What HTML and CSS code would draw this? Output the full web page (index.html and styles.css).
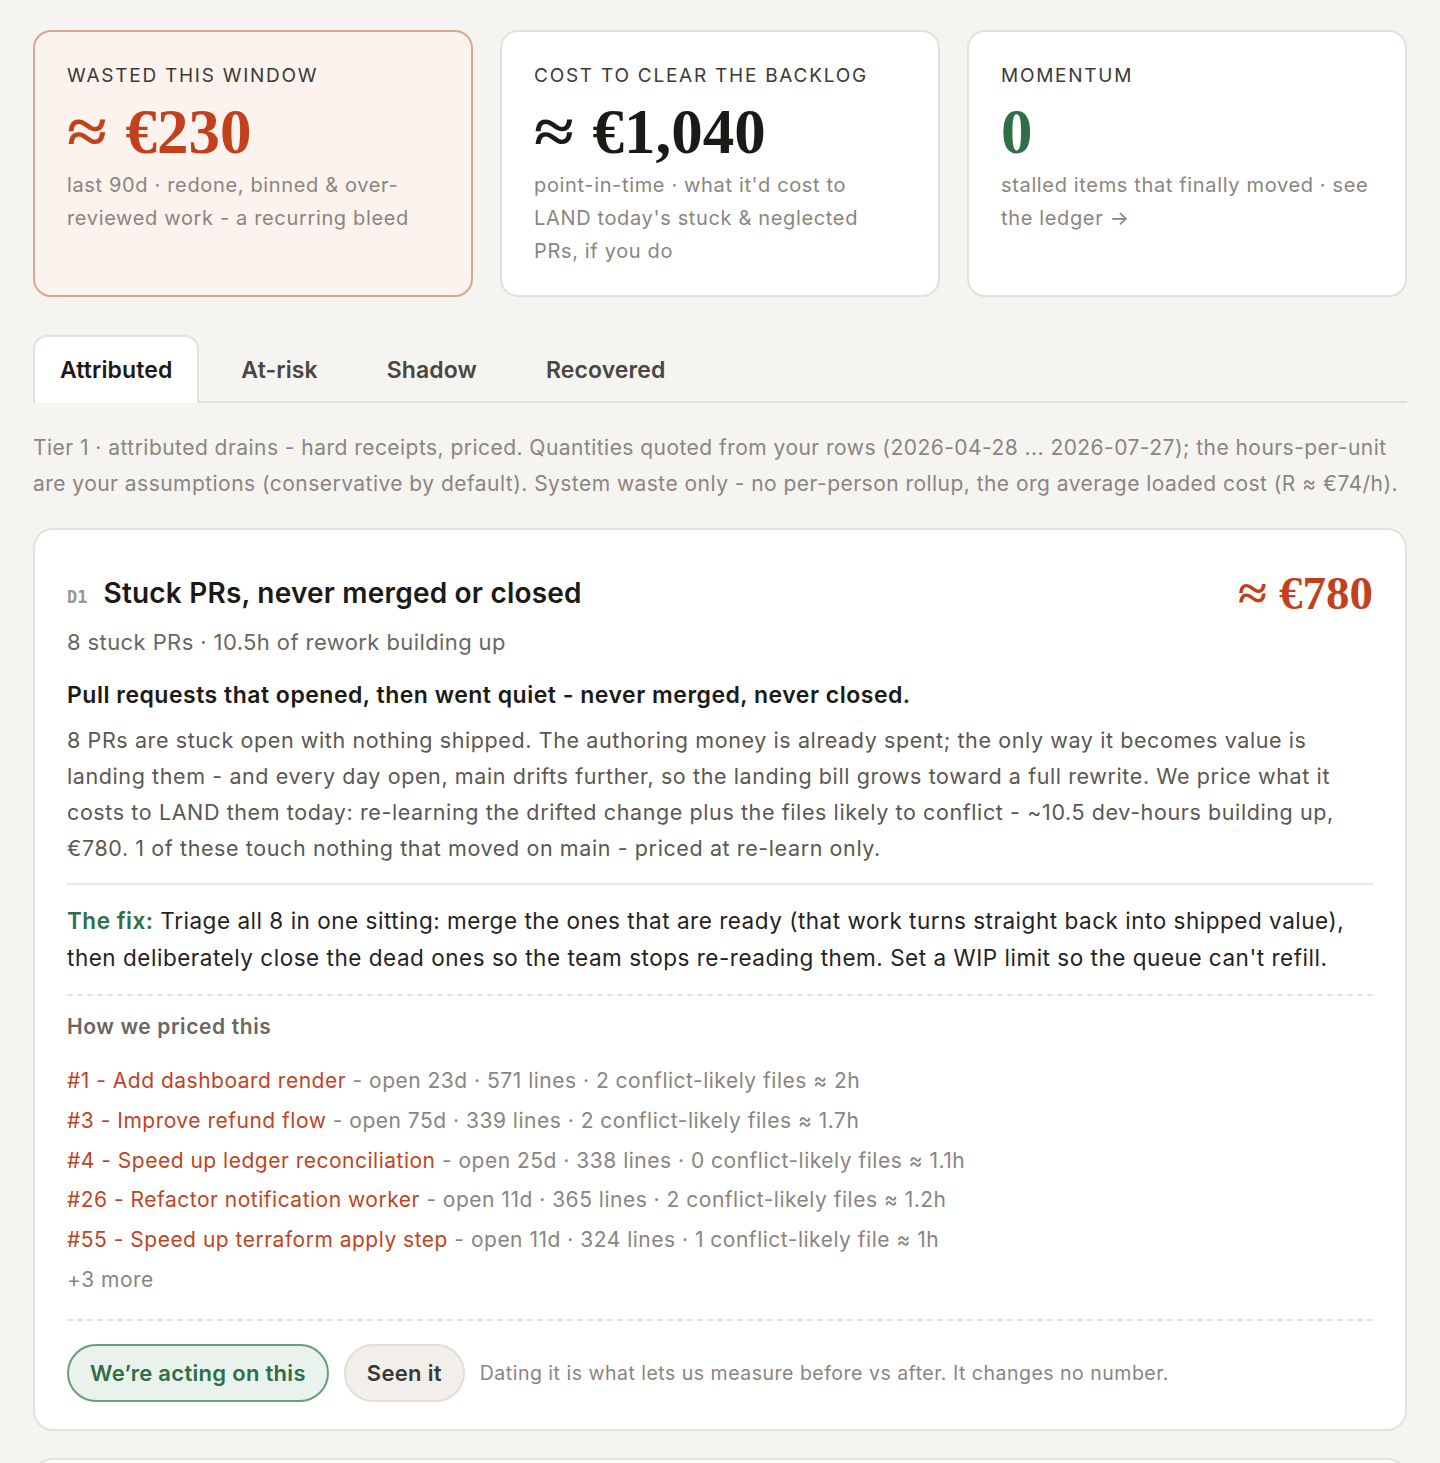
FILE: index.html
```html
<!DOCTYPE html>
<html lang="en">
<head>
<meta charset="utf-8">
<title>Drains</title>
<link rel="stylesheet" href="styles.css">
</head>
<body>
<div class="page">
  <section class="stats">
    <div class="stat stat-wasted">
      <div class="stat-label">WASTED THIS WINDOW</div>
      <div class="stat-value red"><span class="approx">≈</span>€230</div>
      <div class="stat-sub">last 90d · redone, binned &amp; over-reviewed work - a recurring bleed</div>
    </div>
    <div class="stat">
      <div class="stat-label">COST TO CLEAR THE BACKLOG</div>
      <div class="stat-value"><span class="approx">≈</span>€1,040</div>
      <div class="stat-sub">point-in-time · what it'd cost to LAND today's stuck &amp; neglected PRs, if you do</div>
    </div>
    <div class="stat">
      <div class="stat-label">MOMENTUM</div>
      <div class="stat-value green">0</div>
      <div class="stat-sub">stalled items that finally moved · see the ledger →</div>
    </div>
  </section>

  <nav class="tabs">
    <div class="tab active">Attributed</div>
    <div class="tab">At-risk</div>
    <div class="tab">Shadow</div>
    <div class="tab">Recovered</div>
  </nav>

  <p class="tier-desc">Tier 1 · attributed drains - hard receipts, priced. Quantities quoted from your rows (2026-04-28 ... 2026-07-27); the hours-per-unit are your assumptions (conservative by default). System waste only - no per-person rollup, the org average loaded cost (R ≈ €74/h).</p>

  <article class="drain">
    <header class="drain-head">
      <h2 class="drain-title"><span class="drain-code">D1</span>Stuck PRs, never merged or closed</h2>
      <div class="drain-amount"><span class="approx-sm">≈</span>€780</div>
    </header>
    <div class="drain-sub">8 stuck PRs · 10.5h of rework building up</div>
    <h3 class="drain-lead">Pull requests that opened, then went quiet - never merged, never closed.</h3>
    <p class="drain-body">8 PRs are stuck open with nothing shipped. The authoring money is already spent; the only way it becomes value is landing them - and every day open, main drifts further, so the landing bill grows toward a full rewrite. We price what it costs to LAND them today: re-learning the drifted change plus the files likely to conflict - ~10.5 dev-hours building up, €780. 1 of these touch nothing that moved on main - priced at re-learn only.</p>
    <p class="drain-fix"><strong class="fix-label">The fix:</strong> Triage all 8 in one sitting: merge the ones that are ready (that work turns straight back into shipped value), then deliberately close the dead ones so the team stops re-reading them. Set a WIP limit so the queue can't refill.</p>
    <div class="priced">
      <div class="priced-title">How we priced this</div>
      <ul class="pr-list">
        <li><span class="pr-name">#1 - Add dashboard render</span> - open 23d · 571 lines · 2 conflict-likely files ≈ 2h</li>
        <li><span class="pr-name">#3 - Improve refund flow</span> - open 75d · 339 lines · 2 conflict-likely files ≈ 1.7h</li>
        <li><span class="pr-name">#4 - Speed up ledger reconciliation</span> - open 25d · 338 lines · 0 conflict-likely files ≈ 1.1h</li>
        <li><span class="pr-name">#26 - Refactor notification worker</span> - open 11d · 365 lines · 2 conflict-likely files ≈ 1.2h</li>
        <li><span class="pr-name">#55 - Speed up terraform apply step</span> - open 11d · 324 lines · 1 conflict-likely file ≈ 1h</li>
        <li class="pr-more">+3 more</li>
      </ul>
    </div>
    <footer class="drain-actions">
      <button class="btn btn-act">We’re acting on this</button>
      <button class="btn btn-seen">Seen it</button>
      <span class="actions-note">Dating it is what lets us measure before vs after. It changes no number.</span>
    </footer>
  </article>

  <article class="drain drain-next"></article>
</div>
</body>
</html>
```
FILE: styles.css
```css
* { box-sizing: border-box; }
html, body { margin: 0; padding: 0; }
body {
  background: #f6f4f0;
  font-family: Inter, "Noto Sans", "Liberation Sans", sans-serif;
  color: #1f1d1a;
}
.page {
  padding: 30px 33px 0;
  height: 1463px;
  overflow: hidden;
}
.stats {
  display: grid;
  grid-template-columns: repeat(3, 1fr);
  gap: 27px;
}
.stat {
  background: #fff;
  border: 2px solid #e4e1db;
  border-radius: 18px;
  height: 267px;
  padding: 32px 32px 0;
}
.stat-wasted {
  background: #fcf2ee;
  border-color: #dba593;
}
.stat-label {
  font-size: 19px;
  line-height: 24px;
  letter-spacing: 1.75px;
  color: #3c3935;
}
.stat-value {
  font-family: "Liberation Serif", "DejaVu Serif", serif;
  font-weight: 700;
  font-size: 63px;
  line-height: 60px;
  margin-top: 14px;
  color: #1c1a17;
}
.approx {
  display: inline-block;
  margin-right: 24px;
  transform: scaleX(1.15);
  transform-origin: left center;
}
.stat-value.red { color: #c2411c; }
.stat-value.green { color: #2f6e47; }
.stat-sub {
  margin-top: 7px;
  font-size: 20px;
  line-height: 33px;
  color: #8a8580;
  letter-spacing: 0.65px;
}
.tabs {
  display: flex;
  gap: 15px;
  margin-top: 38px;
  border-bottom: 2px solid #e4e1db;
}
.tab {
  height: 68px;
  display: flex;
  align-items: center;
  padding: 0 25px;
  font-size: 23px;
  font-weight: 600;
  letter-spacing: 0.1px;
  color: #4a4641;
  border: 2px solid transparent;
  border-bottom: none;
  border-radius: 14px 14px 0 0;
  margin-bottom: -2px;
}
.tab.active {
  background: #fff;
  border-color: #e4e1db;
  color: #1c1a17;
}
.tier-desc {
  margin: 27px 0 0;
  font-size: 21px;
  line-height: 36px;
  color: #8a8580;
  letter-spacing: 0.46px;
}
.drain {
  margin-top: 26px;
  background: #fff;
  border: 2px solid #e4e1db;
  border-radius: 20px;
  padding: 43px 32px 27px;
}
.drain-head {
  display: flex;
  justify-content: space-between;
  align-items: center;
}
.drain-title {
  margin: 0;
  font-size: 28px;
  line-height: 40px;
  font-weight: 600;
  letter-spacing: 0.2px;
  color: #1c1a17;
  display: flex;
  align-items: baseline;
}
.drain-code {
  font-family: "DejaVu Sans Mono", "Liberation Mono", monospace;
  font-size: 17px;
  font-weight: 700;
  letter-spacing: 0;
  color: #9a958f;
  margin-right: 16px;
}
.drain-amount {
  font-family: "Liberation Serif", "DejaVu Serif", serif;
  font-weight: 700;
  font-size: 47px;
  line-height: 40px;
  color: #c2411c;
  margin-top: -5px;
}
.approx-sm {
  display: inline-block;
  margin-right: 15px;
  transform: scaleX(1.12);
  transform-origin: left center;
}
.drain-sub {
  margin-top: 9px;
  font-size: 22px;
  line-height: 32px;
  letter-spacing: 0.4px;
  color: #6b6661;
}
.drain-lead {
  margin: 20px 0 0;
  font-size: 23px;
  line-height: 34px;
  font-weight: 600;
  letter-spacing: 0.5px;
  color: #1c1a17;
}
.drain-body {
  margin: 10px 0 0;
  font-size: 21.5px;
  line-height: 36px;
  letter-spacing: 0.6px;
  color: #5c5752;
  padding-bottom: 17px;
  border-bottom: 2px solid #e9e6e1;
}
.drain-fix {
  margin: 17px 0 0;
  font-size: 22.5px;
  line-height: 37px;
  letter-spacing: 0.52px;
  color: #26231f;
  padding-bottom: 18px;
  border-bottom: 2px dashed #e6e3de;
}
.fix-label {
  color: #2f6e47;
  font-weight: 600;
}
.priced {
  padding-bottom: 19px;
  border-bottom: 2px dashed #e6e3de;
}
.priced-title {
  margin-top: 16px;
  font-size: 21px;
  line-height: 30px;
  font-weight: 600;
  letter-spacing: 0.6px;
  color: #6b6661;
}
.pr-list {
  list-style: none;
  margin: 19px 0 0;
  padding: 0;
  font-size: 21px;
  line-height: 39.8px;
  letter-spacing: 0.5px;
  color: #8a8580;
}
.pr-name { color: #c0441f; }
.pr-more { color: #8a8580; }
.drain-actions {
  margin-top: 23px;
  display: flex;
  align-items: center;
  gap: 15px;
}
.btn {
  height: 58px;
  border-radius: 29px;
  font-family: inherit;
  font-size: 22px;
  font-weight: 600;
  letter-spacing: 0.3px;
  padding: 0 21px;
  cursor: pointer;
}
.btn-act {
  background: #e9f2ec;
  border: 2px solid #6e9a7e;
  color: #2f6e47;
}
.btn-seen {
  background: #f2efea;
  border: 2px solid #e2ded7;
  color: #3c3935;
}
.actions-note {
  font-size: 19.5px;
  color: #8a8580;
  letter-spacing: 0.5px;
}
.drain-next {
  margin-top: 27px;
  height: 80px;
  padding: 0;
}
```
